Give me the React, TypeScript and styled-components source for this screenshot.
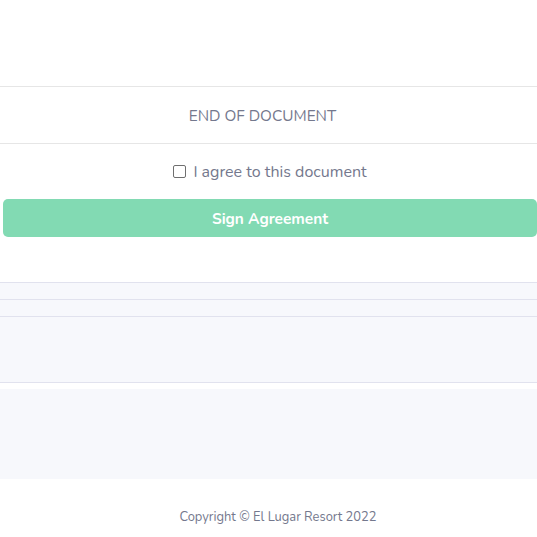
import { styled, createGlobalStyle } from 'styled-components'

const GlobalStyle = createGlobalStyle`
  html, body {
    margin: 0;
    padding: 0;
    background: #ffffff;
    font-family: "Nunito", Lato, "Open Sans", sans-serif;
    color: #74788d;
  }
`

const Page = styled.div`
  width: 537px;
  display: flex;
  flex-direction: column;
`

const DocTail = styled.div`
  height: 86px;
`

const EndRow = styled.div`
  height: 56px;
  border-top: 1px solid #e6e6e6;
  border-bottom: 1px solid #e6e6e6;
  display: flex;
  align-items: center;
  justify-content: center;
  padding-right: 12px;
  font-size: 15.4px;
  color: #74788d;
`

const SignArea = styled.div`
  display: flex;
  flex-direction: column;
  align-items: center;
  padding: 18px 0 0 3px;
  height: 138px;
  box-sizing: border-box;
`

const AgreeLabel = styled.label`
  display: flex;
  align-items: center;
  gap: 7px;
  font-size: 16px;
  color: #74788d;
  height: 19px;
`

const Box = styled.span`
  width: 11px;
  height: 11px;
  border: 1px solid #6f6f6f;
  border-radius: 2px;
  background: #fff;
`

const SignButton = styled.button`
  margin-top: 18px;
  width: 100%;
  height: 38px;
  border: none;
  border-radius: 5px;
  background: #82dab3;
  color: #ffffff;
  font-family: inherit;
  font-size: 15.4px;
  font-weight: 700;
`

const Stack = styled.div`
  background: #f7f8fc;
  border-top: 1px solid #e1e2ee;
`

const Band = styled.div<{ h: number }>`
  height: ${({ h }) => h}px;
  border-bottom: 1px solid #e1e2ee;
`

const Gap = styled.div`
  height: 6px;
  background: #ffffff;
`

const Panel = styled.div`
  height: 90px;
  background: #f7f8fc;
`

const Footer = styled.footer`
  height: 76px;
  display: flex;
  align-items: center;
  justify-content: center;
  padding-left: 19px;
  font-size: 12.9px;
  color: #74788d;
`

export default function App() {
  return (
    <>
      <GlobalStyle />
      <Page>
        <DocTail />
        <EndRow>END OF DOCUMENT</EndRow>
        <SignArea>
          <AgreeLabel>
            <Box />
            I agree to this document
          </AgreeLabel>
          <SignButton>Sign Agreement</SignButton>
        </SignArea>
        <Stack>
          <Band h={16} />
          <Band h={16} />
          <Band h={65} />
        </Stack>
        <Gap />
        <Panel />
        <Footer>Copyright © El Lugar Resort 2022</Footer>
      </Page>
    </>
  )
}
